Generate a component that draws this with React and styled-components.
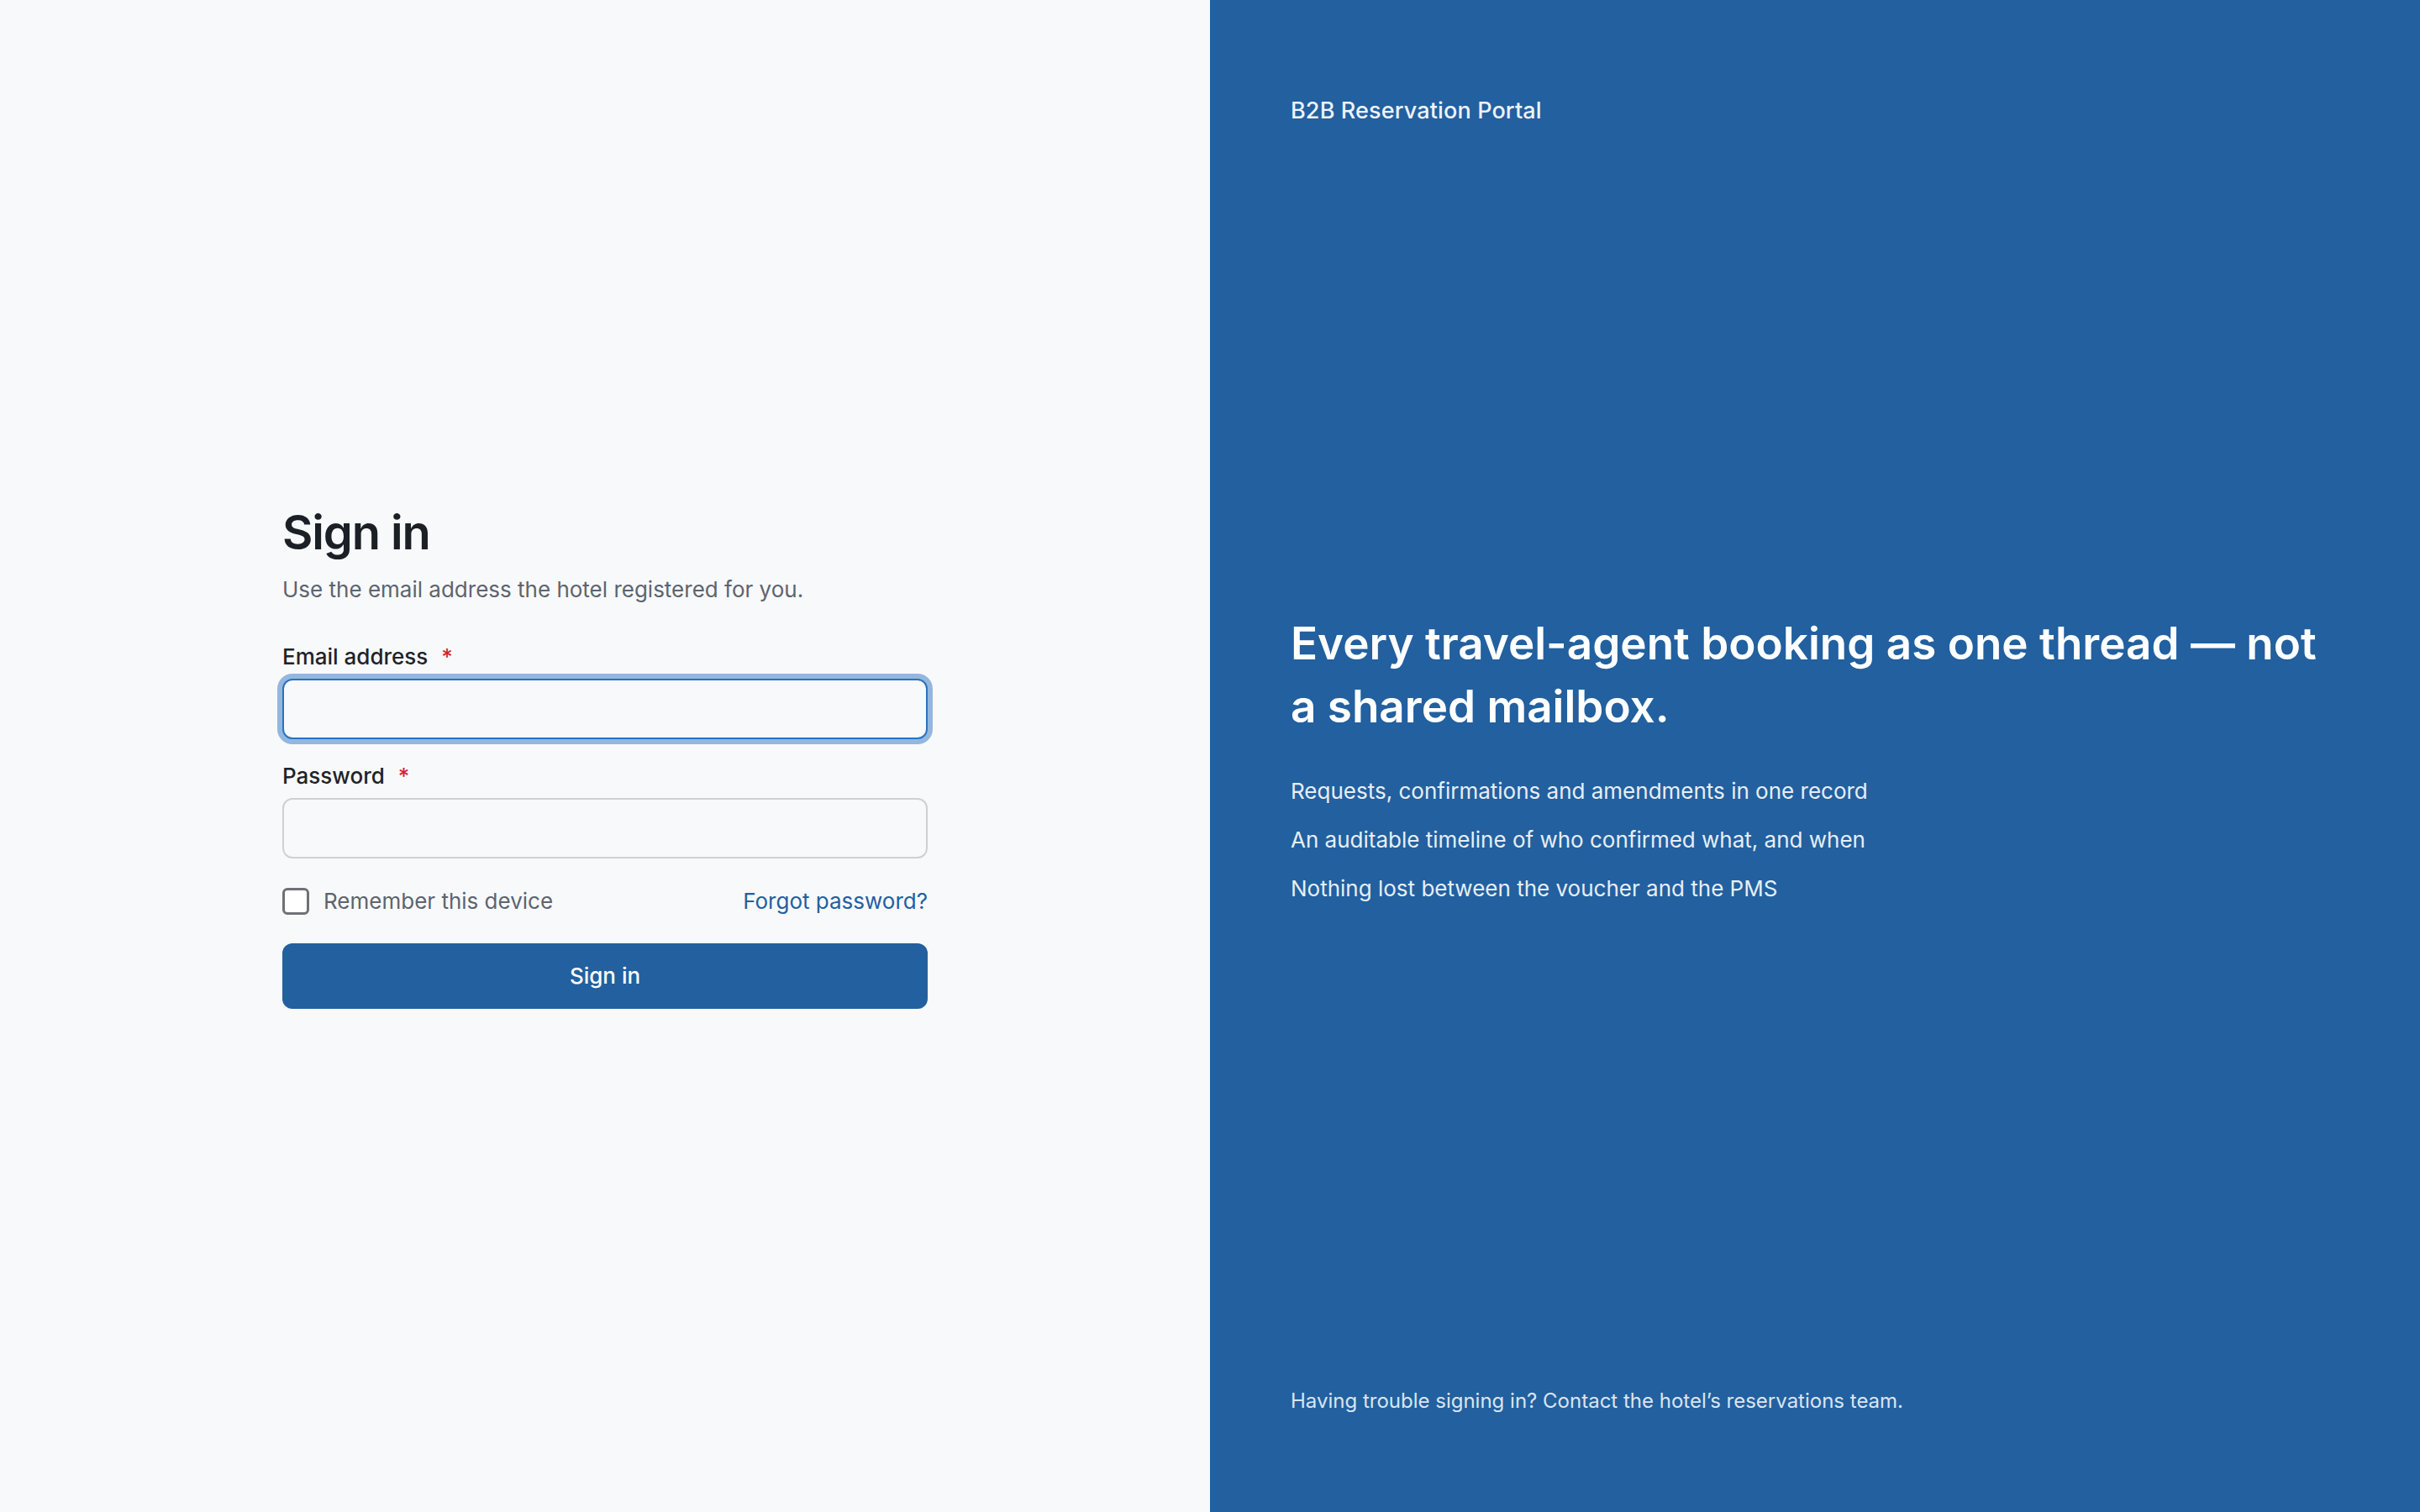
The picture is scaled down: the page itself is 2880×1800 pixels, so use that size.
import React from "react";
import styled, { createGlobalStyle } from "styled-components";

const Global = createGlobalStyle`
  *, *::before, *::after { box-sizing: border-box; }
  html, body, #root { margin: 0; padding: 0; height: 100%; }
  body {
    font-family: Inter, "Noto Sans", "Liberation Sans", sans-serif;
    background: #f8f9fb;
    -webkit-font-smoothing: antialiased;
  }
`;

const Page = styled.div`
  display: grid;
  grid-template-columns: 1fr 1fr;
  height: 100vh;
  min-height: 100%;
`;

const FormPane = styled.main`
  background: #f8f9fb;
  display: flex;
  align-items: center;
  justify-content: center;
  padding-bottom: 6px;
`;

const Form = styled.form`
  width: 768px;
  display: flex;
  flex-direction: column;
`;

const Title = styled.h1`
  margin: 0 0 8px;
  font-size: 56px;
  line-height: 80px;
  font-weight: 600;
  letter-spacing: -0.02em;
  color: #1b1f26;
`;

const Lead = styled.p`
  margin: 0 0 40px;
  font-size: 26px;
  line-height: 40px;
  color: #5d6470;
`;

const Field = styled.div`
  display: flex;
  flex-direction: column;
  gap: 6px;
  margin-bottom: 24px;
`;

const Label = styled.label`
  font-size: 26px;
  line-height: 40px;
  font-weight: 500;
  color: #1f2328;
`;

const Required = styled.span`
  color: #d1242f;
  margin-left: 16px;
`;

const Input = styled.input`
  height: 72px;
  width: 100%;
  padding: 0 24px;
  font: inherit;
  font-size: 26px;
  color: #1f2328;
  background: #f8f9fb;
  border: 2px solid ${(p) => (p.$focused ? "#2a72c0" : "#cdd1d6")};
  border-radius: 12px;
  outline: none;
  box-shadow: ${(p) => (p.$focused ? "0 0 0 6px #93b7df" : "none")};
`;

const OptionsRow = styled.div`
  display: flex;
  align-items: center;
  justify-content: space-between;
  height: 40px;
  margin: 7px 0 30px;
`;

const CheckLabel = styled.label`
  display: flex;
  align-items: center;
  gap: 17px;
  font-size: 26px;
  line-height: 40px;
  color: #5d6470;
`;

const Box = styled.span`
  width: 32px;
  height: 32px;
  border: 3px solid #6e7177;
  border-radius: 6px;
  background: #fff;
`;

const Link = styled.a`
  font-size: 26px;
  line-height: 40px;
  color: #22609f;
  text-decoration: none;
`;

const Button = styled.button`
  height: 78px;
  width: 100%;
  border: none;
  border-radius: 12px;
  background: #22609f;
  color: #ffffff;
  font: inherit;
  font-size: 26px;
  font-weight: 500;
`;

const BrandPane = styled.aside`
  background: #22609f;
  color: #ffffff;
  padding: 112px 96px;
  display: flex;
  flex-direction: column;
  justify-content: space-between;
`;

const Brand = styled.div`
  font-size: 27px;
  line-height: 40px;
  font-weight: 500;
  letter-spacing: 0.005em;
  color: #eef3fa;
`;

const Pitch = styled.section`
  display: flex;
  flex-direction: column;
  padding-top: 6px;
`;

const Headline = styled.h2`
  margin: 0 0 43px;
  font-size: 53px;
  line-height: 75px;
  font-weight: 600;
  letter-spacing: 0;
  color: #ffffff;
`;

const Points = styled.ul`
  list-style: none;
  margin: 0;
  padding: 0;
  display: flex;
  flex-direction: column;
  gap: 18px;
`;

const Point = styled.li`
  font-size: 26px;
  line-height: 40px;
  color: #e7eef7;
`;

const Footer = styled.p`
  margin: 0;
  font-size: 24px;
  line-height: 40px;
  color: #dbe5f1;
`;

export default function App() {
  return (
    <>
      <Global />
      <Page>
        <FormPane>
          <Form onSubmit={(e) => e.preventDefault()}>
            <Title>Sign in</Title>
            <Lead>Use the email address the hotel registered for you.</Lead>
            <Field>
              <Label htmlFor="email">
                Email address<Required>*</Required>
              </Label>
              <Input id="email" type="email" $focused />
            </Field>
            <Field>
              <Label htmlFor="password">
                Password<Required>*</Required>
              </Label>
              <Input id="password" type="password" />
            </Field>
            <OptionsRow>
              <CheckLabel>
                <Box />
                Remember this device
              </CheckLabel>
              <Link href="#">Forgot password?</Link>
            </OptionsRow>
            <Button type="submit">Sign in</Button>
          </Form>
        </FormPane>
        <BrandPane>
          <Brand>B2B Reservation Portal</Brand>
          <Pitch>
            <Headline>
              Every travel-agent booking as one thread — not a shared mailbox.
            </Headline>
            <Points>
              <Point>Requests, confirmations and amendments in one record</Point>
              <Point>An auditable timeline of who confirmed what, and when</Point>
              <Point>Nothing lost between the voucher and the PMS</Point>
            </Points>
          </Pitch>
          <Footer>Having trouble signing in? Contact the hotel’s reservations team.</Footer>
        </BrandPane>
      </Page>
    </>
  );
}
